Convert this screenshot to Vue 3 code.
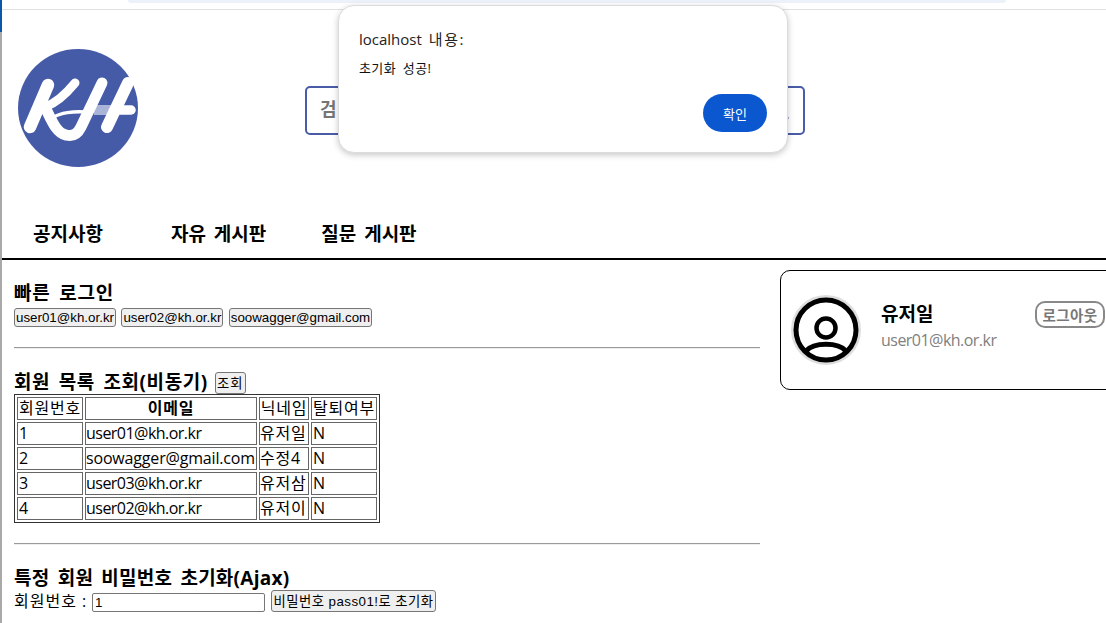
<script setup>
const members = [
  { no: 1, email: 'user01@kh.or.kr', nick: '유저일', out: 'N' },
  { no: 2, email: 'soowagger@gmail.com', nick: '수정4', out: 'N', wide: true },
  { no: 3, email: 'user03@kh.or.kr', nick: '유저삼', out: 'N' },
  { no: 4, email: 'user02@kh.or.kr', nick: '유저이', out: 'N' },
]
const quick = ['user01@kh.or.kr', 'user02@kh.or.kr', 'soowagger@gmail.com']
</script>

<template>
  <div class="page">
    <div class="chrome"><div class="pill"></div></div>
    <header class="header">
      <svg class="logo" width="120" height="118" viewBox="0 0 120 118">
        <ellipse cx="60" cy="59" rx="60" ry="59" fill="#465ba8" />
        <rect x="76" y="56" width="20" height="10" fill="#a9b4d8" />
        <g fill="none" stroke="#fff" stroke-linecap="round" stroke-linejoin="round">
          <path d="M30 36 L12 78" stroke-width="12.5" />
          <path d="M57 34 C48 45 38 54 27 58" stroke-width="9" />
          <path d="M27 58 C33 70 38 84 48 86 C56 88 60 84 63 78 L84 34" stroke-width="11" />
          <path d="M68 63 C55 62 42 64 36 68" stroke-width="3.5" />
          <path d="M110 34 L89 78" stroke-width="12" />
          <path d="M96 61 L113 61" stroke-width="9.5" />
        </g>
      </svg>
      <div class="search">
        <span class="search-text">검</span>
        <svg class="glass" width="24" height="24" viewBox="0 0 24 24">
          <circle cx="10" cy="10" r="7.5" fill="none" stroke="#2f4a9a" stroke-width="3" />
          <path d="M16 16 L22 21" stroke="#2f4a9a" stroke-width="3" stroke-linecap="round" />
        </svg>
      </div>
    </header>
    <nav class="nav">
      <a class="n1">공지사항</a>
      <a class="n2">자유 게시판</a>
      <a class="n3">질문 게시판</a>
    </nav>
    <main class="main">
      <section class="left">
        <h3 class="t1">빠른 로그인</h3>
        <div class="quick">
          <button v-for="q in quick" :key="q" class="btn">{{ q }}</button>
        </div>
        <hr class="rule r1" />
        <h3 class="t2"><span>회원 목록 조회(비동기)</span><button class="btn small">조회</button></h3>
        <table class="tbl">
          <thead>
            <tr>
              <th class="c1">회원번호</th>
              <th class="c2">이메일</th>
              <th class="c3">닉네임</th>
              <th class="c4">탈퇴여부</th>
            </tr>
          </thead>
          <tbody>
            <tr v-for="m in members" :key="m.no">
              <td>{{ m.no }}</td>
              <td class="mailcell" :class="{ wide: m.wide }">{{ m.email }}</td>
              <td class="ko">{{ m.nick }}</td>
              <td>{{ m.out }}</td>
            </tr>
          </tbody>
        </table>
        <hr class="rule r2" />
        <h3 class="t3">특정 회원 비밀번호 초기화(Ajax)</h3>
        <div class="reset">
          <span class="reset-label">회원번호 :</span>
          <input class="inp" value="1" />
          <button class="btn long">비밀번호 pass01!로 초기화</button>
        </div>
      </section>
      <aside class="card">
        <svg class="avatar" width="70" height="70" viewBox="0 0 70 70">
          <circle cx="35" cy="35" r="33.5" fill="#fff" stroke="#dedede" stroke-width="3" />
          <circle cx="35" cy="35" r="30" fill="none" stroke="#000" stroke-width="5" />
          <circle cx="35" cy="33" r="9.5" fill="none" stroke="#000" stroke-width="4.5" />
          <path d="M15 56 C23 47 47 47 55 56" fill="none" stroke="#000" stroke-width="5" />
        </svg>
        <div class="info">
          <div class="name">유저일</div>
          <div class="mail">user01@kh.or.kr</div>
        </div>
        <button class="logout">로그아웃</button>
      </aside>
    </main>
    <div class="dialog">
      <div class="d-title">localhost <span class="d-ko">내용:</span></div>
      <div class="d-msg">초기화 성공!</div>
      <div class="d-foot"><button class="d-ok">확인</button></div>
    </div>
  </div>
</template>

<style>
html, body { margin: 0; overflow: hidden; background: #fff; }
</style>

<style scoped>
.page {
  position: relative;
  width: 1106px;
  height: 623px;
  overflow: hidden;
  box-sizing: border-box;
  padding-left: 2px;
  font-family: "Open Sans", "Noto Sans CJK KR", sans-serif;
  font-size: 16px;
  color: #000;
}
.page::before {
  content: "";
  position: absolute;
  left: 0;
  top: 0;
  width: 2px;
  height: 623px;
  background: linear-gradient(#0b57a8 0 32px, #a9a9a9 32px);
}
.chrome {
  height: 9px;
  border-bottom: 1px solid #e0e0e0;
  display: flex;
  padding-left: 126px;
}
.pill {
  width: 878px;
  height: 3px;
  background: #edf1fa;
  border-radius: 0 0 8px 8px;
}
.header {
  height: 200px;
  display: flex;
  align-items: flex-start;
}
.logo {
  margin: 39px 0 0 16px;
  flex: none;
}
.search {
  margin: 76px 0 0 167px;
  width: 500px;
  height: 49px;
  box-sizing: border-box;
  border: 2px solid #4a5ca8;
  border-radius: 5px;
  display: flex;
  align-items: center;
  justify-content: space-between;
  padding: 0 14px 0 13px;
}
.search-text {
  font-size: 18px;
  font-weight: 700;
  color: #757575;
  margin-bottom: 5px;
}
.glass { margin-top: -3px; }
.nav {
  height: 48px;
  border-bottom: 2px solid #000;
  display: flex;
  align-items: center;
  font-size: 19px;
  font-weight: 700;
  word-spacing: 3px;
  line-height: 44px;
}
.n1 { margin-left: 31px; }
.n2 { margin-left: 68px; }
.n3 { margin-left: 55px; }
.main {
  display: flex;
  align-items: flex-start;
}
.left {
  width: 746px;
  margin-left: 12px;
  flex: none;
}
h3 {
  margin: 0;
  font-size: 19px;
  font-weight: 700;
  word-spacing: 3px;
}
.t1 { margin-top: 21px; line-height: 25px; letter-spacing: 0.8px; }
.quick {
  display: flex;
  gap: 5.4px;
  margin-top: 2px;
}
.btn {
  font-family: "Liberation Sans", "Noto Sans CJK KR", sans-serif;
  font-size: 13.33px;
  font-weight: 400;
  padding: 1px;
  height: 19px;
  line-height: 15px;
  background: #efefef;
  border: 1px solid #767676;
  border-radius: 3px;
  color: #000;
  white-space: nowrap;
  word-spacing: 0;
  letter-spacing: 0;
}
.rule {
  margin: 0;
  border: 0;
  border-top: 1px solid #9a9a9a;
  border-bottom: 1px solid #eee;
}
.r1 { margin-top: 20px; }
.t2 {
  margin-top: 23px;
  height: 22px;
  line-height: 20px;
  display: flex;
  align-items: flex-start;
  gap: 7px;
  letter-spacing: 0.6px;
}
.small {
  height: 22px;
  width: 31px;
  letter-spacing: 1px;
}
.tbl {
  border: 1px solid #333;
  border-spacing: 2px;
  border-collapse: separate;
  table-layout: fixed;
  width: 366px;
  font-size: 16px;
  line-height: 21px;
}
.tbl th, .tbl td {
  box-sizing: border-box;
  border: 1px solid #666;
  padding: 0 1px;
  height: 23px;
  white-space: nowrap;
  overflow: hidden;
}
.tbl th { font-weight: 400; letter-spacing: 0.8px; padding: 0; }
.tbl .c1 { width: 66px; }
.tbl .c2 { width: 172px; font-weight: 700; }
.tbl .c3 { width: 50px; }
.tbl .c4 { width: 66px; }
.tbl .mailcell { padding: 0; letter-spacing: -0.53px; }
.tbl .mailcell.wide { letter-spacing: -0.17px; }
.tbl .ko { letter-spacing: 0.8px; padding: 0; }
.rule.r2 { margin-top: 20px; }
.t3 { margin-top: 21px; line-height: 24px; letter-spacing: 0.25px; }
.reset {
  display: flex;
  align-items: flex-end;
  height: 22px;
  line-height: 22px;
}
.reset-label {
  width: 78px;
  flex: none;
  letter-spacing: 1px;
  white-space: nowrap;
}
.inp {
  width: 173px;
  height: 19px;
  box-sizing: border-box;
  font-family: "Liberation Sans", sans-serif;
  font-size: 13.33px;
  padding: 1px 2px;
  border: 1px solid #767676;
  border-radius: 2px;
  margin-right: 6px;
  flex: none;
}
.long {
  height: 22px;
  width: 165px;
  letter-spacing: 0.45px;
  flex: none;
}
.card {
  margin-left: 20px;
  margin-top: 10px;
  width: 340px;
  height: 120px;
  flex: none;
  box-sizing: border-box;
  border: 1px solid #000;
  border-radius: 10px;
  display: flex;
  align-items: flex-start;
  padding: 24px 0 0 10px;
}
.avatar { flex: none; }
.info {
  margin-left: 20px;
  width: 154px;
  flex: none;
}
.name {
  font-size: 19px;
  font-weight: 700;
  line-height: 26px;
  margin-top: 6px;
}
.mail {
  color: #808080;
  font-size: 16px;
  line-height: 26px;
  letter-spacing: -0.53px;
}
.logout {
  margin-top: 6px;
  width: 70px;
  height: 27px;
  box-sizing: border-box;
  padding: 0;
  border: 2px solid #888;
  border-radius: 10px;
  background: #fff;
  color: #777;
  font-family: "Noto Sans CJK KR", sans-serif;
  font-size: 14.5px;
  letter-spacing: 0.4px;
  font-weight: 700;
}
.dialog {
  position: absolute;
  left: 338px;
  top: 5px;
  width: 450px;
  height: 148px;
  box-sizing: border-box;
  background: #fff;
  border: 1px solid #dcdcdc;
  border-radius: 16px;
  box-shadow: 0 2px 6px rgba(0, 0, 0, 0.22);
  padding: 21px 20px 0;
}
.d-title {
  font-size: 15px;
  line-height: 24px;
  color: #222;
  word-spacing: 3px;
}
.d-ko { letter-spacing: 1.6px; }
.d-msg {
  font-size: 13px;
  line-height: 16px;
  margin-top: 9px;
  color: #111;
  word-spacing: 3px;
  letter-spacing: 0.4px;
}
.d-foot {
  display: flex;
  justify-content: flex-end;
  margin-top: 18px;
}
.d-ok {
  width: 64px;
  height: 38px;
  border: 0;
  border-radius: 19px;
  background: #0b57d0;
  color: #fff;
  font-family: "Noto Sans CJK KR", sans-serif;
  font-size: 13px;
  padding: 0;
}
</style>
